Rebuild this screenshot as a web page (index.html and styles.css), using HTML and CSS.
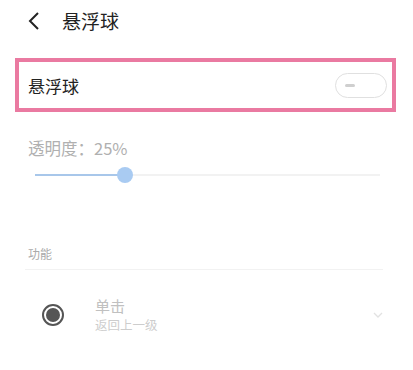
FILE: index.html
```
<!DOCTYPE html>
<html lang="zh">
<head>
<meta charset="utf-8">
<link rel="stylesheet" href="styles.css">
</head>
<body>
<div class="page">
  <header class="header">
    <svg class="back" width="14" height="20" viewBox="0 0 14 20"><path d="M11 2 L3 10 L11 18" fill="none" stroke="#222" stroke-width="2"/></svg>
    <span class="title">悬浮球</span>
  </header>
  <div class="switch-row">
    <span class="switch-label">悬浮球</span>
    <span class="toggle"><span class="toggle-dash"></span></span>
  </div>
  <div class="opacity">
    <div class="opacity-label">透明度：25%</div>
    <div class="slider">
      <div class="track"></div>
      <div class="fill" style="width:26%"></div>
      <div class="thumb" style="left:26%"></div>
    </div>
  </div>
  <div class="section-title">功能</div>
  <div class="item">
    <span class="radio"><span class="radio-dot"></span></span>
    <div class="item-text">
      <div class="item-title">单击</div>
      <div class="item-sub">返回上一级</div>
    </div>
    <svg class="chev" width="10" height="6" viewBox="0 0 10 6"><path d="M1 1 L5 5 L9 1" fill="none" stroke="#e2e2e2" stroke-width="1.3"/></svg>
  </div>
</div>
</body>
</html>
```
FILE: styles.css
```
html, body {
  margin: 0;
  padding: 0;
  background: #fff;
}
.page {
  width: 413px;
  height: 370px;
  overflow: hidden;
  font-family: "Noto Sans CJK SC", "Noto Sans", sans-serif;
}
.header {
  height: 42px;
  display: flex;
  align-items: center;
  padding-left: 27px;
}
.back {
  display: block;
}
.title {
  margin-left: 21px;
  font-size: 19px;
  color: #222;
  line-height: 24px;
}
.switch-row {
  margin: 16px 17px 0 15px;
  height: 46px;
  border: 4px solid #ea7aa1;
  display: flex;
  align-items: center;
  justify-content: space-between;
  padding: 0 5px 0 9px;
}
.switch-label {
  font-size: 17px;
  color: #222;
}
.toggle {
  height: 23px;
  border: 1.5px solid #e0e0e0;
  border-radius: 13px;
  display: flex;
  align-items: center;
  padding-left: 9px;
  box-sizing: content-box;
  width: 41px;
}
.toggle-dash {
  width: 10px;
  height: 3px;
  border-radius: 2px;
  background: #cfcfcf;
}
.opacity {
  padding: 24px 0 0 28px;
}
.opacity-label {
  font-size: 16.5px;
  color: #b0b0b0;
  line-height: 24px;
}
.slider {
  position: relative;
  margin: 4px 33px 0 7px;
  height: 22px;
}
.track {
  position: absolute;
  left: 0;
  right: 0;
  top: 10px;
  height: 1.5px;
  background: #f2f2f2;
}
.fill {
  position: absolute;
  left: 0;
  top: 10px;
  height: 1.5px;
  background: #a8c7ea;
}
.thumb {
  position: absolute;
  top: 3px;
  width: 16px;
  height: 16px;
  margin-left: -8px;
  border-radius: 50%;
  background: #a9cbf2;
}
.section-title {
  margin: 59px 30px 0 25px;
  padding: 0 0 6px 3px;
  font-size: 12px;
  color: #aaa;
  line-height: 18px;
  border-bottom: 1.5px solid #f2f2f2;
}
.item {
  display: flex;
  align-items: center;
  padding: 26px 30px 0 42px;
}
.radio {
  width: 18px;
  height: 18px;
  border: 2px solid #555;
  border-radius: 50%;
  display: flex;
  align-items: center;
  justify-content: center;
}
.radio-dot {
  width: 14px;
  height: 14px;
  border-radius: 50%;
  background: #555;
}
.item-text {
  margin-left: 31px;
  flex: 1;
}
.item-title {
  font-size: 15px;
  color: #c0c0c0;
  line-height: 20px;
}
.item-sub {
  font-size: 12.5px;
  color: #cdcdcd;
  line-height: 18px;
}
.chev {
  display: block;
}
```
